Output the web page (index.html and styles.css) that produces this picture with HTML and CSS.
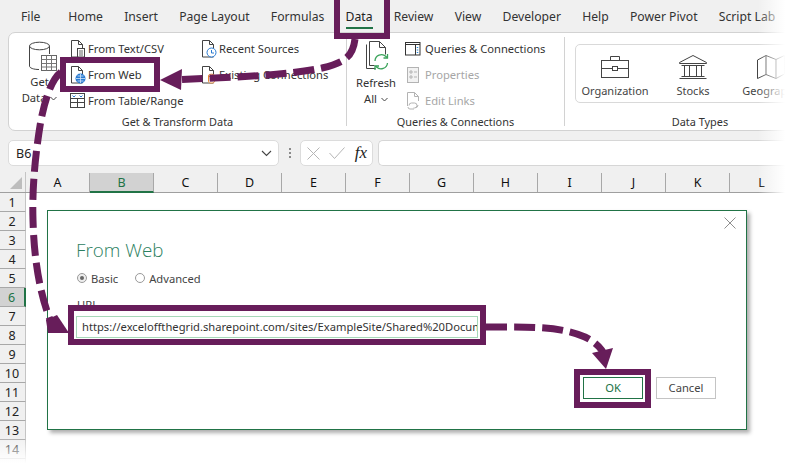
FILE: index.html
```html
<!DOCTYPE html>
<html lang="en">
<head>
<meta charset="utf-8">
<title>From Web</title>
<link rel="stylesheet" href="styles.css">
</head>
<body>
<div class="app">
  <div class="chrome">
    <nav class="tabs">
      <span class="tab tab-file">File</span><span class="tab">Home</span><span class="tab">Insert</span><span class="tab">Page Layout</span><span class="tab">Formulas</span><span class="tab tab-active">Data</span><span class="tab">Review</span><span class="tab">View</span><span class="tab">Developer</span><span class="tab">Help</span><span class="tab">Power Pivot</span><span class="tab">Script Lab</span>
    </nav>
    <div class="ribbon">
      <section class="group group-get">
        <div class="group-body">
          <div class="large">
            <svg class="large-icon" width="30" height="30" viewBox="0 0 30 30" fill="none" stroke="#444"><path d="M1.5 5v20c0 2 4 3.5 9.5 3.5M21.5 5v8"/><ellipse cx="11.500" cy="5" rx="10" ry="3.800" fill="#fff"/><rect x="13.500" y="14.500" width="15" height="15" fill="#fff" stroke="#666"/><path d="M13.500 18.500h15M13.500 22.500h15M13.500 26h15M18.500 14.500v15M23.500 14.500v15" stroke="#777"/></svg>
            <span>Get</span>
            <span>Data <svg class="chev" width="7" height="5" viewBox="0 0 7 5" fill="none" stroke="#444"><path d="M.5 1l3 3 3-3"/></svg></span>
          </div>
          <div class="small-col small-col-a">
            <div class="small"><svg class="small-icon" width="16" height="18" viewBox="0 0 16 18" fill="none" stroke="#444"><path d="M1.500.5h7l4 4v12.500h-11zM8.500.5v4h4"/><rect x="7.500" y="8.500" width="7" height="8.500" fill="#fff"/><path d="M9 11h4M9 13h4M9 15h4" stroke="#666"/></svg>From Text/CSV</div>
            <div class="small"><svg class="small-icon" width="16" height="18" viewBox="0 0 16 18" fill="none" stroke="#444"><path d="M1.500.5h7l4 4v12.500h-11zM8.500.5v4h4"/><circle cx="10.500" cy="12.500" r="5" fill="#2b7cd3" stroke="none"/><path d="M6 12.500h9M10.500 8v9M7.500 10h6M7.500 15h6" stroke="#d5e6f7" stroke-width=".8"/></svg>From Web</div>
            <div class="small"><svg class="small-icon" width="16" height="18" viewBox="0 0 16 18" fill="none" stroke="#444"><rect x=".5" y="1.500" width="14" height="14"/><path d="M.5 6.500h14M.5 10.500h14M7.500 6.500v9"/><path d="M2.500 3.500l1.500 1.500 1.500-1.500M9.500 3.500l1.500 1.500 1.500-1.500" stroke="#2b7cd3"/></svg>From Table/Range</div>
          </div>
          <div class="small-col">
            <div class="small"><svg class="small-icon" width="16" height="18" viewBox="0 0 16 18" fill="none" stroke="#444"><path d="M1.500.5h7l4 4v12.500h-11zM8.500.5v4h4"/><circle cx="10.500" cy="12.500" r="4.500" fill="#fff" stroke="#2b7cd3"/><path d="M10.500 10v3h2.500" stroke="#2b7cd3"/></svg>Recent Sources</div>
            <div class="small"><svg class="small-icon" width="16" height="18" viewBox="0 0 16 18" fill="none" stroke="#444"><path d="M1.500.5h7l4 4v12.500h-11zM8.500.5v4h4"/><path d="M7.500 9.500v6c0 2 6 2 6 0v-6z" fill="#fff" stroke="#e8862e"/><ellipse cx="10.500" cy="9.500" rx="3" ry="1.300" fill="#fff" stroke="#e8862e"/></svg>Existing Connections</div>
          </div>
        </div>
        <div class="group-label">Get &amp; Transform Data</div>
      </section>
      <div class="divider"></div>
      <section class="group group-queries">
        <div class="group-body">
          <div class="large large-refresh">
            <svg class="large-icon" width="24" height="30" viewBox="0 0 24 30" fill="none" stroke="#444"><path d="M1.500 3.500v24h9"/><path d="M4.500.5h10l6 6v7M14.500.5v6h6M4.500.5v24h5"/><g stroke="#3aa35a" stroke-width="1.300"><path d="M10 20a6.500 6.500 0 0 1 11-4.500l1 1"/><path d="M22.500 13v4h-4"/><path d="M22.500 22a6.500 6.500 0 0 1-11 4l-1-1"/><path d="M10 29v-4h4"/></g></svg>
            <span>Refresh</span>
            <span>All <svg class="chev" width="7" height="5" viewBox="0 0 7 5" fill="none" stroke="#444"><path d="M.5 1l3 3 3-3"/></svg></span>
          </div>
          <div class="small-col">
            <div class="small small-wide"><svg class="small-icon" width="16" height="14" viewBox="0 0 16 14" fill="none" stroke="#333"><rect x=".5" y=".5" width="14.500" height="12.500"/><path d="M.5 2.500h14.500M10.500 2.500v10.500"/><path d="M12.500 5v1M12.500 7.500v1M12.500 10v1" stroke="#2b88d8" stroke-width="1.500"/></svg>Queries &amp; Connections</div>
            <div class="small small-wide small-off"><svg class="small-icon" width="16" height="18" viewBox="0 0 16 18" fill="none" stroke="#b3b3b3"><rect x="2.500" y="1.500" width="11" height="15" fill="#f2f2f2"/><path d="M5 5h2v2H5zM5 10h2v2H5zM9 6h3M9 11h3"/></svg>Properties</div>
            <div class="small small-wide small-off"><svg class="small-icon" width="16" height="18" viewBox="0 0 16 18" fill="none" stroke="#b3b3b3"><path d="M2.500 14V.5h7l4 4V9M9.500.5v4h4"/><path d="M4 13.500a2.500 2.500 0 0 1 2.500-2.500h3a2.500 2.500 0 0 1 0 5h-1M13 13a2.500 2.500 0 0 1-2.500 2.500"/><path d="M3 15a2 2 0 0 0 2 2h4"/></svg>Edit Links</div>
          </div>
        </div>
        <div class="group-label">Queries &amp; Connections</div>
      </section>
      <div class="divider"></div>
      <section class="group group-types">
        <div class="group-body">
          <div class="gallery">
            <div class="type">
              <svg width="28" height="22" viewBox="0 0 28 22" fill="none" stroke="#444"><rect x=".5" y="4.500" width="27" height="17"/><path d="M9.500 4.500v-4h9v4M.5 12.500h11M16.500 12.500h11"/><rect x="11.500" y="10.500" width="5" height="4"/></svg>
              <span>Organization</span>
            </div>
            <div class="type">
              <svg width="28" height="24" viewBox="0 0 28 24" fill="none" stroke="#444"><path d="M.5 7.500L14 .5l13.500 7v1H.5zM2.500 10.500h23M.5 23.500h27M2.500 21.500h23M5.500 10.500v11M10.500 10.500v11M17.500 10.500v11M22.500 10.500v11"/></svg>
              <span>Stocks</span>
            </div>
            <div class="type">
              <svg width="28" height="24" viewBox="0 0 28 24" fill="none" stroke="#444"><path d="M.5 5L9 .5l10 4 8.500-4V19L19 23.500l-10-4L.5 23.500zM9 .5v19M19 4.500v19"/></svg>
              <span>Geography</span>
            </div>
          </div>
        </div>
        <div class="group-label group-label-types">Data Types</div>
      </section>
    </div>
    <div class="formula">
      <div class="namebox">
        <span>B6</span>
        <svg width="11" height="7" viewBox="0 0 11 7" fill="none" stroke="#444" stroke-width="1.100"><path d="M1 1l4.500 4.500L10 1"/></svg>
      </div>
      <div class="dots"><i></i><i></i><i></i></div>
      <div class="fxbox">
        <svg width="13" height="13" viewBox="0 0 13 13" fill="none" stroke="#b5b5b5"><path d="M.5.500l12 12M12.500.500l-12 12"/></svg>
        <svg width="16" height="12" viewBox="0 0 16 12" fill="none" stroke="#b5b5b5"><path d="M.5 6l5 5.500L15.500.5"/></svg>
        <span class="fx">fx</span>
      </div>
      <div class="fxinput"></div>
    </div>
    <div class="cols">
      <div class="corner"><svg width="12" height="12" viewBox="0 0 12 12"><path d="M12 0v12H0z" fill="#bdbdbd"/></svg></div>
      <div class="col">A</div><div class="col col-on">B</div><div class="col">C</div><div class="col">D</div><div class="col">E</div><div class="col">F</div><div class="col">G</div><div class="col">H</div><div class="col">I</div><div class="col">J</div><div class="col">K</div><div class="col">L</div>
    </div>
  </div>
  <div class="rows">
    <div class="row">1</div><div class="row">2</div><div class="row">3</div><div class="row">4</div><div class="row">5</div><div class="row row-on">6</div><div class="row">7</div><div class="row">8</div><div class="row">9</div><div class="row">10</div><div class="row">11</div><div class="row">12</div><div class="row">13</div><div class="row">14</div><div class="row">15</div>
  </div>

  <div class="dialog">
    <svg class="dialog-close" width="12" height="12" viewBox="0 0 12 12" fill="none" stroke="#8f8f8f"><path d="M.5.500l11 11M11.500.500l-11 11"/></svg>
    <h1 class="dialog-title">From Web</h1>
    <div class="radios">
      <label class="radio"><i class="dot dot-on"></i>Basic</label>
      <label class="radio"><i class="dot"></i>Advanced</label>
    </div>
    <div class="url-label">URL</div>
    <div class="url-input">https://exceloffthegrid.sharepoint.com/sites/ExampleSite/Shared%20Documents/Example.xlsx</div>
    <div class="dialog-actions">
      <div class="btn btn-ok">OK</div>
      <div class="btn">Cancel</div>
    </div>
  </div>

  <div class="fade-right"></div>
  <div class="fade-bottom"></div>

  <svg class="marks" width="794" height="470" viewBox="0 0 794 470" fill="none" stroke="#671d5a">
    <g stroke-width="6">
      <rect x="337" y="-10" width="50" height="46"/>
      <rect x="63" y="60" width="94" height="29"/>
      <rect x="71" y="308" width="412" height="34"/>
      <rect x="577" y="372" width="71" height="33"/>
    </g>
    <g stroke-width="7" stroke-dasharray="21 7">
      <path d="M355 39C353 56 346 62 322 68C290 75 240 77 182 79.500"/>
      <path d="M61 72C51 80 45 100 41 120C35 155 32 190 33 220C34 260 40 295 51 322"/>
      <path d="M486 327L510 327C540 327 565 328 585 337C595 342 602 348 606 358"/>
    </g>
    <g fill="#671d5a" stroke="none">
      <path d="M160 80L182 69L181 90z"/>
      <path d="M48 333L69 333L57 315L46 320z"/>
      <path d="M592 353L613 348L606 369z"/>
    </g>
  </svg>
</div>
</body>
</html>
```

FILE: styles.css
```css
* { box-sizing: border-box; }
html, body { margin: 0; padding: 0; background: #fff; }
body { font-family: "Noto Sans", "Open Sans", sans-serif; font-size: 11.200px; color: #333; }
.app { position: relative; width: 794px; height: 470px; overflow: hidden; background: #fff; }

.chrome { background: #f0f0f0; padding-top: 1px; }
.tabs { display: flex; height: 31px; padding-left: 21px; gap: 21.200px; align-items: center; font-size: 12.200px; color: #333; white-space: nowrap; }
.tab-file { margin-right: 6.600px; }
.tab-active { position: relative; color: #222; }
.tab-active::after { content: ""; position: absolute; left: 0; right: 0; bottom: -4px; height: 2px; background: #217346; }

.ribbon { display: flex; width: 830px; height: 99px; margin-left: 8px; background: #fff; border: 1px solid #d2d2d2; border-radius: 7px; color: #333; }
.group { display: flex; flex-direction: column; flex: none; padding-top: 2px; }
.group-get { width: 337px; }
.group-queries { width: 217px; }
.group-types { width: 270px; }
.group-body { display: flex; height: 79px; }
.group-label { height: 16px; line-height: 16px; text-align: center; font-size: 10.900px; white-space: nowrap; }
.divider { width: 1px; flex: none; margin: 4px 0 4px; background: #d2d2d2; }

.large { display: flex; flex-direction: column; align-items: center; width: 61px; padding-top: 6px; line-height: 16px; flex: none; }
.large-icon { margin-bottom: 3px; flex: none; }
.group-get .large-icon { margin-left: 6px; }
.large-refresh { width: 58px; }
.large-refresh .large-icon { margin-bottom: 4px; margin-left: 1px; }
.chev { vertical-align: 1px; margin-left: 1px; }

.small-col { display: flex; flex-direction: column; }
.small-col-a { width: 131px; flex: none; }
.small { display: flex; align-items: center; height: 26px; white-space: nowrap; }
.small-icon { flex: none; margin: 2px 2px 0 0; width: 16px; }
.small-wide .small-icon { margin-right: 4px; }
.small-off { color: #a6a6a6; }

.gallery { display: flex; width: 300px; height: 59px; margin: 9px 0 0 10px; padding-top: 10px; border: 1px solid #d9d9d9; border-radius: 5px; font-size: 11px; }
.type { display: flex; flex-direction: column; align-items: center; width: 78px; flex: none; color: #444; }
.type svg { height: 24px; margin-bottom: 4px; }
.type span { line-height: 16px; }

.formula { display: flex; align-items: stretch; height: 26px; margin: 9px 0 6px 8px; }
.namebox { display: flex; align-items: center; justify-content: space-between; width: 271px; padding: 0 6px 0 7px; background: #fff; border: 1px solid #dcdcdc; border-radius: 5px; font-size: 12.500px; color: #222; }
.dots { display: flex; flex-direction: column; justify-content: center; gap: 2px; width: 21px; align-items: center; }
.dots i { width: 2px; height: 2px; background: #8a8a8a; }
.fxbox { display: flex; align-items: center; justify-content: space-between; width: 73px; padding: 0 5px 0 6px; background: #fff; border: 1px solid #dcdcdc; border-radius: 5px; }
.fx { font-family: "Liberation Serif", serif; font-style: italic; font-size: 17px; color: #222; }
.fxinput { flex: 1; margin-left: 5px; background: #fff; border: 1px solid #d6d6d6; border-right: 0; border-radius: 5px 0 0 5px; }

.cols { display: flex; height: 21px; border-bottom: 1px solid #9f9f9f; font-size: 12.500px; color: #111; }
.corner { display: flex; width: 26px; flex: none; padding: 5px 3px 0 0; justify-content: flex-end; border-right: 1px solid #c4c4c4; }
.col { width: 64px; flex: none; display: flex; align-items: center; justify-content: center; border-right: 1px solid #a8a8a8; margin-top: 1px; }
.col-on { background: #d2d2d2; color: #217346; border-bottom: 2px solid #217346; margin-bottom: -1px; }

.rows { display: flex; flex-direction: column; width: 26px; }
.row { height: 19px; flex: none; display: flex; align-items: center; justify-content: center; padding-right: 1px; background: #f0f0f0; border-right: 1px solid #c4c4c4; border-bottom: 1px solid #a8a8a8; font-size: 12.500px; color: #222; }
.row-on { background: #d2d2d2; color: #217346; border-right: 2px solid #217346; }

.dialog { position: absolute; left: 47px; top: 210px; width: 700px; height: 220px; display: flex; flex-direction: column; padding: 25px 30px 30px 29px; background: #fff; border: 1px solid #217346; box-shadow: 3px 3px 4px rgba(0, 0, 0, .32); }
.dialog-close { position: absolute; right: 10px; top: 6px; }
.dialog-title { margin: 0 0 0 -1px; height: 28px; line-height: 28px; font-family: "Open Sans", "Noto Sans", sans-serif; font-weight: 300; font-size: 18.800px; color: #2c8060; }
.radios { display: flex; gap: 17px; margin-top: 5px; height: 18px; align-items: center; color: #444; }
.radio { display: flex; align-items: center; gap: 4px; }
.dot { display: block; position: relative; width: 10px; height: 10px; border: 1px solid #9a9a9a; border-radius: 50%; background: #fff; }
.dot-on { background: #eee; }
.dot-on::after { content: ""; position: absolute; left: 2px; top: 2px; width: 4px; height: 4px; border-radius: 50%; background: #666; }
.url-label { height: 16px; line-height: 16px; margin-top: 10px; color: #444; }
.url-input { width: 402px; height: 22px; margin: 3px 0 0 -1px; padding: 0 0 0 5px; line-height: 20px; border: 1px solid #a6d8b8; overflow: hidden; white-space: nowrap; color: #333; }
.dialog-actions { display: flex; justify-content: flex-end; gap: 13px; margin-top: auto; }
.btn { width: 60px; height: 22px; display: flex; align-items: center; justify-content: center; padding-bottom: 1px; border: 1px solid #c4c4c4; color: #444; }
.btn-ok { border-color: #217346; color: #217346; }

.fade-right { position: absolute; left: 758px; top: 0; width: 36px; height: 194px; background: linear-gradient(to right, rgba(255, 255, 255, 0), #fff 75%); }
.fade-bottom { position: absolute; left: 0; top: 436px; width: 40px; height: 34px; background: linear-gradient(to bottom, rgba(255, 255, 255, 0), #fff 80%); }
.marks { position: absolute; left: 0; top: 0; pointer-events: none; }
```
